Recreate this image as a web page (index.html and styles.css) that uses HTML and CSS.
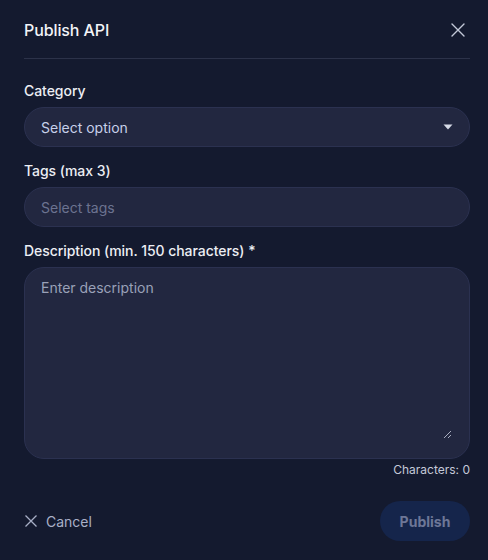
FILE: index.html
```html
<!DOCTYPE html>
<html>
<head>
<meta charset="utf-8">
<link rel="stylesheet" href="styles.css">
</head>
<body>
<div class="modal">
  <div class="header">
    <h2 class="title">Publish API</h2>
    <button class="close" aria-label="Close">
      <svg width="16" height="16" viewBox="0 0 16 16"><path d="M2 2L14 14M14 2L2 14" stroke="#c3c8d8" stroke-width="1.4" fill="none" stroke-linecap="round"/></svg>
    </button>
  </div>
  <div class="form">
    <div class="field">
      <label class="label">Category</label>
      <div class="control select">
        <span class="value">Select option</span>
        <svg class="caret" width="10" height="6" viewBox="0 0 10 6"><path d="M0.5 0.5H9.5L5 5.5Z" fill="#d6dae6"/></svg>
      </div>
    </div>
    <div class="field">
      <label class="label">Tags (max 3)</label>
      <div class="control">
        <span class="placeholder">Select tags</span>
      </div>
    </div>
    <div class="field">
      <label class="label">Description (min. 150 characters) *</label>
      <div class="control textarea">
        <span class="placeholder light">Enter description</span>
        <svg class="grip" width="9" height="9" viewBox="0 0 9 9"><path d="M8 1L1 8M8 5L5 8" stroke="#a9aec0" stroke-width="1" fill="none"/></svg>
      </div>
      <div class="count">Characters: 0</div>
    </div>
  </div>
  <div class="footer">
    <button class="cancel">
      <svg width="14" height="14" viewBox="0 0 14 14"><path d="M1.5 1.5L12.5 12.5M12.5 1.5L1.5 12.5" stroke="#a8afc6" stroke-width="1.3" fill="none"/></svg>
      <span>Cancel</span>
    </button>
    <button class="publish">Publish</button>
  </div>
</div>
</body>
</html>
```

FILE: styles.css
```css
* { box-sizing: border-box; }
html, body {
  margin: 0;
  padding: 0;
  background: #141a2f;
}
body {
  font-family: Inter, "Noto Sans", sans-serif;
  color: #e9ecf4;
  width: 488px;
  height: 560px;
  overflow: hidden;
}
.modal {
  padding: 0 18px 0 24px;
  display: flex;
  flex-direction: column;
}
.header {
  display: flex;
  align-items: center;
  justify-content: space-between;
  padding: 18px 0 16px;
  border-bottom: 1px solid #2c3249;
}
.title {
  margin: 0;
  font-size: 16px;
  font-weight: 500;
  line-height: 24px;
  color: #f3f4f8;
  letter-spacing: -0.1px;
}
.close {
  background: none;
  border: 0;
  padding: 0;
  margin-right: 4px;
  width: 16px;
  height: 16px;
  display: flex;
}
.form {
  padding-top: 22px;
  display: flex;
  flex-direction: column;
  gap: 14px;
}
.field {
  display: flex;
  flex-direction: column;
}
.label {
  font-size: 14px;
  line-height: 20px;
  font-weight: 500;
  color: #eceef4;
  margin-bottom: 6px;
  letter-spacing: -0.05px;
}
.control {
  height: 40px;
  border-radius: 20px;
  background: #222740;
  border: 1px solid #2b3150;
  display: flex;
  align-items: center;
  padding: 0 16px 0 16px;
  font-size: 14px;
  position: relative;
}
.select {
  justify-content: space-between;
}
.value {
  color: #c7d0ea;
}
.placeholder {
  color: #6c7390;
}
.placeholder.light {
  color: #9aa1b8;
}
.textarea {
  height: 192px;
  align-items: flex-start;
  padding-top: 11px;
}
.grip {
  position: absolute;
  right: 17px;
  bottom: 19px;
}
.count {
  text-align: right;
  font-size: 12px;
  line-height: 16px;
  margin-top: 3px;
  color: #c4c9d8;
}
.footer {
  display: flex;
  justify-content: space-between;
  align-items: center;
  margin-top: 23px;
}
.cancel {
  background: none;
  border: 0;
  padding: 0;
  display: flex;
  align-items: center;
  gap: 8px;
  font-family: inherit;
  font-size: 14px;
  color: #a9b0c7;
}
.publish {
  width: 90px;
  height: 40px;
  border-radius: 20px;
  border: 0;
  background: #15254b;
  color: #6d7797;
  font-family: inherit;
  font-size: 14px;
  font-weight: 700;
}
```
